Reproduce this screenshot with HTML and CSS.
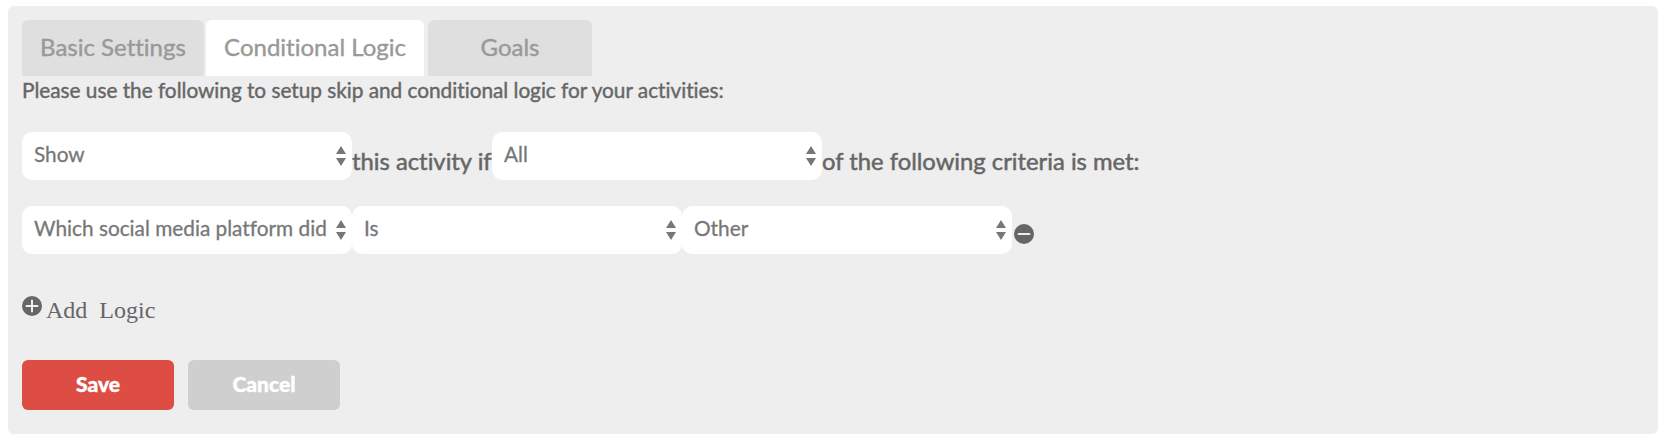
FILE: index.html
```html
<!DOCTYPE html>
<html lang="en">
<head>
<meta charset="utf-8">
<title>Conditional Logic</title>
<link rel="stylesheet" href="styles.css">
</head>
<body>
<main class="panel">
  <nav class="tabs">
    <a class="tab tab-basic"><span>Basic Settings</span></a>
    <a class="tab tab-logic active"><span>Conditional Logic</span></a>
    <a class="tab tab-goals"><span>Goals</span></a>
  </nav>
  <p class="intro"><span>Please use the following to setup skip and conditional logic for your activities:</span></p>
  <div class="row">
    <div class="select"><span class="value">Show</span><svg class="arrows" width="10" height="20" viewBox="0 0 10 20"><path d="M0 8 5 0l5 8zM0 12h10l-5 8z"/></svg></div>
    <span class="label label-if">this activity if</span>
    <div class="select"><span class="value">All</span><svg class="arrows" width="10" height="20" viewBox="0 0 10 20"><path d="M0 8 5 0l5 8zM0 12h10l-5 8z"/></svg></div>
    <span class="label">of the following criteria is met:</span>
  </div>
  <div class="row">
    <div class="select"><span class="value">Which social media platform did</span><svg class="arrows" width="10" height="20" viewBox="0 0 10 20"><path d="M0 8 5 0l5 8zM0 12h10l-5 8z"/></svg></div>
    <div class="select"><span class="value">Is</span><svg class="arrows" width="10" height="20" viewBox="0 0 10 20"><path d="M0 8 5 0l5 8zM0 12h10l-5 8z"/></svg></div>
    <div class="select"><span class="value">Other</span><svg class="arrows" width="10" height="20" viewBox="0 0 10 20"><path d="M0 8 5 0l5 8zM0 12h10l-5 8z"/></svg></div>
    <svg class="remove" width="20" height="20" viewBox="0 0 20 20"><circle cx="10" cy="10" r="10"/><path d="M4.5 10h11"/></svg>
  </div>
  <div class="add">
    <svg class="plus" width="20" height="20" viewBox="0 0 20 20"><circle cx="10" cy="10" r="10"/><path d="M4.5 10h11M10 4.5v11"/></svg>
    <span class="add-text">Add&nbsp; Logic</span>
  </div>
  <div class="actions">
    <button class="btn save">Save</button>
    <button class="btn cancel">Cancel</button>
  </div>
</main>
</body>
</html>
```

FILE: styles.css
```css
* { box-sizing: border-box; }
body {
  margin: 0;
  padding: 6px 8px 4px;
  background: #fff;
  color: #666;
  font-family: Lato, sans-serif;
  font-variant-ligatures: none;
}
.panel {
  height: 428px;
  padding: 14px;
  border-radius: 6px;
  background: #eee;
}
.tabs { display: flex; height: 56px; }
.tab {
  display: block;
  height: 56px;
  border-radius: 6px 6px 0 0;
  background: #dfdfdf;
  color: #999;
  font-size: 24px;
  line-height: 53px;
  text-align: center;
  white-space: nowrap;
  -webkit-text-stroke: 0.4px currentColor;
}
.tab-basic { width: 182px; margin-right: 2px; }
.tab-logic { width: 218px; margin-right: 4px; }
.tab-goals { width: 164px; }
.tab.active { background: #fff; }
.intro {
  margin: 0 0 28px;
  font-size: 20.8px;
  line-height: 28px;
  letter-spacing: -0.02px;
  white-space: nowrap;
  -webkit-text-stroke: 0.4px currentColor;
}
.row {
  display: flex;
  height: 48px;
  margin-bottom: 26px;
}
.select {
  display: flex;
  justify-content: space-between;
  flex: none;
  width: 330px;
  height: 48px;
  padding: 0 6px 0 12px;
  border-radius: 10px;
  background: #fff;
  color: #777;
}
.value {
  font-size: 20.8px;
  line-height: 43px;
  white-space: nowrap;
  -webkit-text-stroke: 0.3px currentColor;
}
.arrows { flex: none; margin-top: 14px; fill: #777; }
.label {
  font-size: 23.8px;
  line-height: 58px;
  white-space: nowrap;
  -webkit-text-stroke: 0.5px currentColor;
}
.label-if { width: 140px; }
.remove, .plus {
  fill: #666;
  stroke: none;
}
.remove path, .plus path {
  fill: none;
  stroke: #eee;
  stroke-width: 2;
  stroke-linecap: round;
}
.remove { margin: 17.5px 0 0 2px; }
.add {
  display: flex;
  height: 65px;
  margin-top: 41px;
  gap: 4px;
}
.plus { margin-top: 0.5px; }
.add-text {
  font-family: "Liberation Serif", serif;
  font-size: 24px;
  line-height: 30px;
}
.actions { display: flex; gap: 14px; }
.btn {
  width: 152px;
  height: 50px;
  padding: 0 0 2px;
  border: 0;
  border-radius: 6px;
  color: #fff;
  font: 900 21px/48px Lato, sans-serif;
  -webkit-text-stroke: 0.4px currentColor;
}
.save { background: #de4d44; }
.cancel { background: #cfcfcf; }
```
